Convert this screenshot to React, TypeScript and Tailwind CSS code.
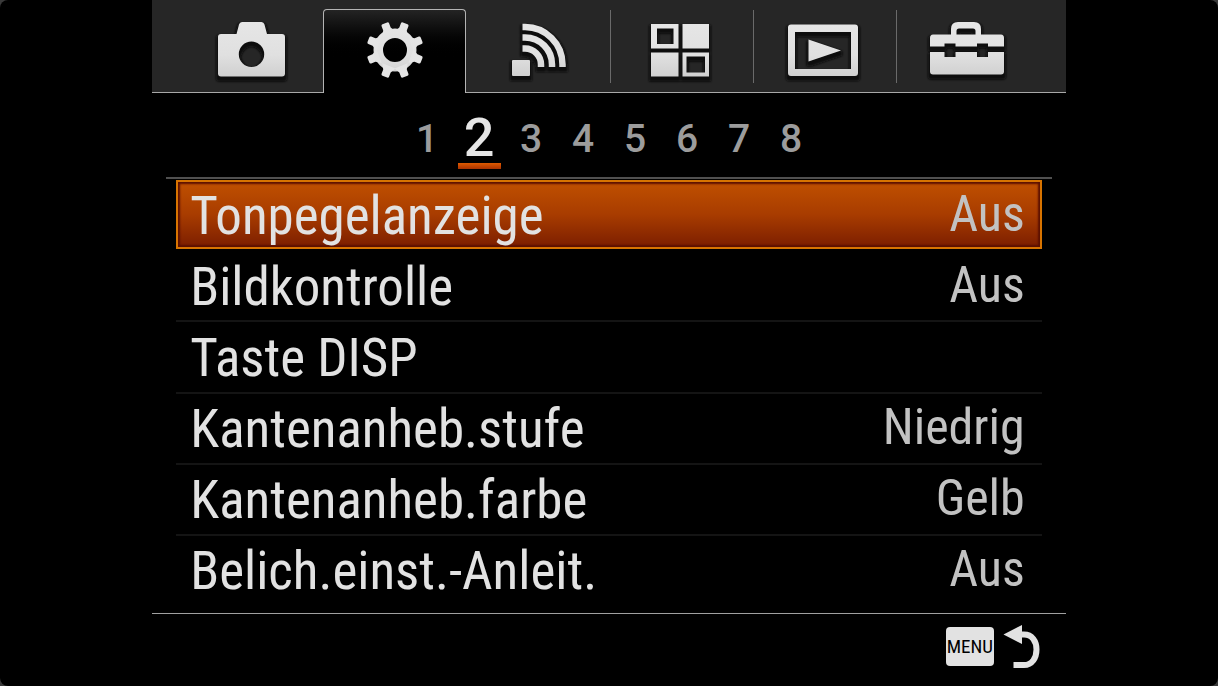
import React, { useState } from 'react';
import clsx from 'clsx';

const Icon = ({ id, shadow = true, children }: { id: string, shadow?: boolean, children: React.ReactNode }) => (
    <svg width="80" height="70" viewBox="0 0 80 70" className="shrink-0 overflow-visible" aria-hidden="true">
        <defs>
            <linearGradient id={id} gradientUnits="userSpaceOnUse" x1="0" y1="7" x2="0" y2="62">
                <stop offset="0" stopColor="#e6e6e6" />
                <stop offset="0.6" stopColor="#e0e0e0" />
                <stop offset="1" stopColor="#cfcfcf" />
            </linearGradient>
            <filter id={`${id}-shadow`} x="-20%" y="-20%" width="140%" height="150%">
                <feMorphology operator="dilate" radius="2" />
                <feOffset dy="3" />
                <feGaussianBlur stdDeviation="0.9" />
            </filter>
        </defs>
        {shadow && <g fill="#0c0c0c" stroke="#0c0c0c" strokeWidth="0" filter={`url(#${id}-shadow)`}>{children}</g>}
        <g fill={`url(#${id})`} stroke={`url(#${id})`} strokeWidth="0">{children}</g>
    </svg>
);

const CameraIcon = () => (
    <Icon id="camera">
        <path fillRule="evenodd" d="M9 19H24.5L27 9.5Q27.7 7 30 7H49.5Q51.8 7 52.5 9.5L55 19H70Q73 19 73 22V58.5Q73 61.5 70 61.5H9Q6 61.5 6 58.5V22Q6 19 9 19ZM39.5 26.6a12.7 12.7 0 1 0 0 25.4a12.7 12.7 0 1 0 0-25.4Z" />
    </Icon>
);

const GearIcon = () => (
    <Icon id="gear" shadow={false}>
        <circle cx="40" cy="35" r="16.75" fill="none" strokeWidth="9.5" />
        {[21, 69, 111, 159, 201, 249, 291, 339].map((angle) => (
            <path key={angle} transform={`rotate(${angle} 40 35)`} d="M33 18L36 12.5V8Q36 6.5 37.5 6.5H42.5Q44 6.5 44 8V12.5L47 18Z" />
        ))}
    </Icon>
);

const WirelessIcon = () => (
    <Icon id="wireless">
        <rect x="14" y="45" width="18" height="16" rx="1" />
        <path fill="none" strokeWidth="6.5" d="M24.5 12H27A37.5 37.5 0 0 1 64.5 49.5V52" />
        <path fill="none" strokeWidth="6.5" d="M24.5 22.5H27A27 27 0 0 1 54 49.5V52" />
        <path fill="none" strokeWidth="6.5" d="M24.5 33.5H27A16 16 0 0 1 43 49.5V52" />
    </Icon>
);

const AppsIcon = () => (
    <Icon id="apps">
        <path fillRule="evenodd" d="M11 9H38.5V33.5H11ZM17 13.5V29H33.5V13.5Z" />
        <path d="M42.5 9H69V33.5H42.5Z" />
        <path d="M11 37.5H38.5V61.5H11Z" />
        <path fillRule="evenodd" d="M42.5 37.5H69V61.5H42.5ZM46.5 41.5V57.5H65V41.5Z" />
    </Icon>
);

const PlaybackIcon = () => (
    <Icon id="playback">
        <path fillRule="evenodd" d="M8 9.5H72Q75 9.5 75 12.5V58Q75 61 72 61H8Q5 61 5 58V12.5Q5 9.5 8 9.5ZM12 17V54H68V17Z" />
        <path d="M25.5 24.5L58 35.5L25.5 46.5Z" />
    </Icon>
);

const ToolboxIcon = () => (
    <Icon id="toolbox">
        <path fillRule="evenodd" d="M7 19.5H25V14Q25 7 32 7H48Q55 7 55 14V19.5H75Q78 19.5 78 23V31.5H62V28.5H51V31.5H29.5V28.5H18.5V31.5H4V23Q4 19.5 7 19.5ZM30.5 19.5H49.5V16Q49.5 13.5 47 13.5H33Q30.5 13.5 30.5 16Z" />
        <path d="M4 37H18.5V42H29.5V37H51V42H62V37H78V56.5Q78 59.5 75 59.5H7Q4 59.5 4 56.5Z" />
    </Icon>
);

const tabs = [
    { label: 'Kamera', icon: CameraIcon },
    { label: 'Einstellungen', icon: GearIcon },
    { label: 'Drahtlos', icon: WirelessIcon },
    { label: 'Applikation', icon: AppsIcon },
    { label: 'Wiedergabe', icon: PlaybackIcon },
    { label: 'Setup', icon: ToolboxIcon },
];

const pages = [1, 2, 3, 4, 5, 6, 7, 8];

const items = [
    { label: 'Tonpegelanzeige', value: 'Aus' },
    { label: 'Bildkontrolle', value: 'Aus' },
    { label: 'Taste DISP', value: '' },
    { label: 'Kantenanheb.stufe', value: 'Niedrig' },
    { label: 'Kantenanheb.farbe', value: 'Gelb' },
    { label: 'Belich.einst.-Anleit.', value: 'Aus' },
];

export default function App() {
    const [tab, setTab] = useState(1);
    const [page, setPage] = useState(2);
    const [selected, setSelected] = useState(0);

    return (
        <div className="bg-[#3a3a3a]">
            <div className="min-h-screen rounded-lg bg-black flex justify-center font-['Roboto_Condensed',Roboto,sans-serif]">
                <main className="w-3/4 flex flex-col">
                    <nav className="grid grid-cols-6 h-[93px] px-7 pt-[9px] bg-[#262626] border-b border-[#a8a8a8]">
                        {tabs.map(({ label, icon: TabIcon }, i) => (
                            <button
                                key={label}
                                aria-label={label}
                                onClick={() => setTab(i)}
                                className={clsx(
                                    'border border-b-0 rounded-t -mb-px flex items-start',
                                    i === tab ? 'border-[#b4b4b4] bg-linear-to-b from-[#242424] to-black to-60%' : 'border-transparent'
                                )}
                            >
                                <span className={clsx('w-full h-[73px] pt-[5px] pr-px flex justify-center border-l', i > 0 && i !== tab && i !== tab + 1 ? 'border-[#6a6a6a]' : 'border-transparent')}>
                                    <TabIcon />
                                </span>
                            </button>
                        ))}
                    </nav>

                    <div className="h-[84px] flex justify-center items-start font-[Roboto,sans-serif] font-medium">
                        {pages.map((n) => (
                            <button
                                key={n}
                                onClick={() => setPage(n)}
                                className={clsx(
                                    'w-[52px] h-[76px] flex flex-col items-center',
                                    n === page ? 'text-[54px] leading-[74px] pt-[8px] text-[#e6e6e6]' : 'text-[39px] leading-[92px] text-[#9c9c9c]'
                                )}
                            >
                                <span className="h-[62px]">{n}</span>
                                {n === page && <span className="w-[43px] h-[6px] shrink-0 bg-linear-to-b from-[#e05a00] to-[#a83200]" />}
                            </button>
                        ))}
                    </div>

                    <div className="mx-[14px] h-[2px] bg-[#505050]" />

                    <ul className="mx-6 pb-[6px] flex-1 flex flex-col">
                        {items.map(({ label, value }, i) => (
                            <li key={label} className={clsx('flex-1 flex', i === selected ? 'pt-px pb-[2px]' : 'border-b-2', i === items.length - 1 ? 'border-transparent' : 'border-[#141414]')}>
                                <button
                                    onClick={() => setSelected(i)}
                                    className={clsx(
                                        'w-full flex items-center justify-between border-2 pt-[2px] pl-3 pr-[15px] text-left',
                                        i === selected ? 'border-[#d87400] bg-linear-to-b from-[#c05000] via-[#a83c00] to-[#7c1e00] shadow-[inset_0_0_2px_2px_#5c1000]' : 'border-transparent'
                                    )}
                                >
                                    <span className="text-[53px] leading-[60px] text-[#e2e2e2]">{label}</span>
                                    <span className="pb-1 text-[50px] leading-[56px] text-[#c2c2c2]">{value}</span>
                                </button>
                            </li>
                        ))}
                    </ul>

                    <footer className="h-[73px] px-6 border-t border-[#a0a0a0] flex justify-end items-start">
                        <button className="mt-[8px] flex items-center gap-2">
                            <span className="w-12 h-[39px] mt-px rounded bg-[#e2e2e2] text-black text-[19px] leading-[39px] text-center">MENU</span>
                            <svg width="40" height="48" viewBox="0 0 40 48" aria-hidden="true">
                                <path d="M1.5 12.5L20 3V22Z" fill="#e2e2e2" />
                                <path d="M19 12.5H22C30 12.5 34.5 19 34.5 27.5S30 43 22 43H11.5" fill="none" stroke="#e2e2e2" strokeWidth="6" />
                            </svg>
                        </button>
                    </footer>
                </main>
            </div>
        </div>
    );
}
